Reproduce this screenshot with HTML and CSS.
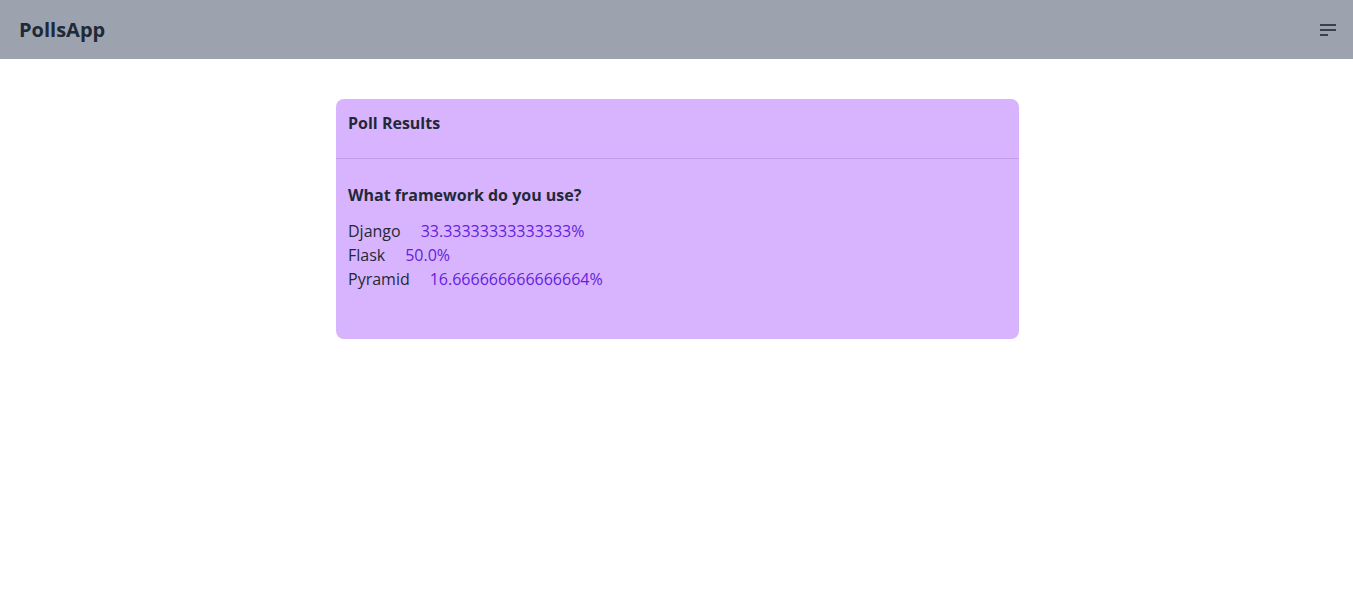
FILE: index.html
```html
<!DOCTYPE html>
<html lang="en">
<head>
<meta charset="utf-8">
<title>PollsApp</title>
<link rel="stylesheet" href="styles.css">
</head>
<body>
<nav class="navbar">
  <a class="brand" href="#">PollsApp</a>
  <button class="menu-btn" aria-label="Menu">
    <svg width="16" height="14" viewBox="0 0 16 14">
      <rect x="0" y="1" width="16" height="2" fill="#374151"/>
      <rect x="0" y="6" width="16" height="2" fill="#374151"/>
      <rect x="0" y="11" width="8" height="2" fill="#374151"/>
    </svg>
  </button>
</nav>
<main class="main">
  <section class="card">
    <header class="card-header">
      <h3 class="card-title">Poll Results</h3>
    </header>
    <div class="card-body">
      <h4 class="question">What framework do you use?</h4>
      <ul class="results">
        <li class="result"><span class="choice">Django</span><span class="pct">33.33333333333333%</span></li>
        <li class="result"><span class="choice">Flask</span><span class="pct">50.0%</span></li>
        <li class="result"><span class="choice">Pyramid</span><span class="pct">16.666666666666664%</span></li>
      </ul>
    </div>
  </section>
</main>
</body>
</html>
```
FILE: styles.css
```css
* { box-sizing: border-box; }
html, body {
  margin: 0;
  padding: 0;
  background: #ffffff;
  font-family: "Open Sans", "Noto Sans", "Liberation Sans", sans-serif;
  color: #1f2937;
  font-size: 16px;
  line-height: 24px;
}
.navbar {
  height: 59px;
  background: #9ca3af;
  display: flex;
  align-items: center;
  justify-content: space-between;
  padding: 0 17px 0 19px;
}
.brand {
  font-size: 20px;
  font-weight: 700;
  color: #1f2937;
  text-decoration: none;
  line-height: 28px;
}
.menu-btn {
  background: none;
  border: 0;
  padding: 0;
  display: flex;
  cursor: pointer;
}
.main {
  padding-top: 40px;
  padding-left: 2px;
}
.card {
  width: 683px;
  margin: 0 auto;
  background: #d8b4fe;
  border-radius: 8px;
  overflow: hidden;
}
.card-header {
  padding: 12px 12px 23px;
  border-bottom: 1px solid #c49be9;
}
.card-title {
  margin: 0;
  font-size: 16px;
  font-weight: 700;
  line-height: 24px;
}
.card-body {
  padding: 24px 12px 48px;
}
.question {
  margin: 0 0 12px;
  font-size: 16px;
  font-weight: 700;
  line-height: 24px;
}
.results {
  list-style: none;
  margin: 0;
  padding: 0;
}
.result {
  display: flex;
  gap: 20px;
}
.pct {
  color: #6321dd;
}
```
